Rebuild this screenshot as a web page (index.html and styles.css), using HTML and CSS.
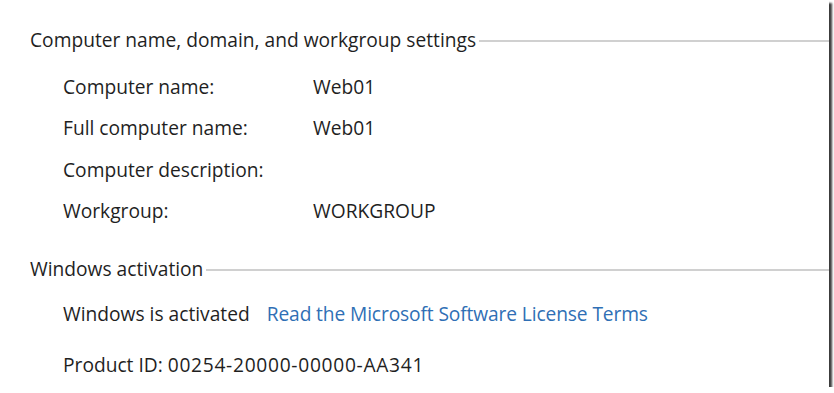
FILE: index.html
```html
<!DOCTYPE html>
<html lang="en">
<head>
<meta charset="utf-8">
<title>System</title>
<link rel="stylesheet" href="styles.css">
</head>
<body>
<div class="frame">
  <section class="group group-first">
    <div class="heading"><span class="heading-text">Computer name, domain, and workgroup settings</span><span class="rule"></span></div>
    <div class="props">
      <div class="label">Computer name:</div><div class="value">Web01</div>
      <div class="label">Full computer name:</div><div class="value">Web01</div>
      <div class="label">Computer description:</div><div class="value"></div>
      <div class="label">Workgroup:</div><div class="value">WORKGROUP</div>
    </div>
  </section>
  <section class="group group-second">
    <div class="heading"><span class="heading-text">Windows activation</span><span class="rule"></span></div>
    <div class="activation">
      <span class="status">Windows is activated</span>
      <a class="link" href="#">Read the Microsoft Software License Terms</a>
    </div>
    <div class="product">Product ID: <span class="product-id">00254-20000-00000-AA341</span></div>
  </section>
</div>
</body>
</html>
```
FILE: styles.css
```css
html, body {
  margin: 0;
  padding: 0;
  background: #ffffff;
}
body {
  font-family: "Open Sans", "Noto Sans", sans-serif;
  font-size: 19.2px;
  color: #1f1f1f;
}
.frame {
  width: 829px;
  height: 387px;
  background: #ffffff;
  box-shadow: 3px 3px 2px #3c3c3c;
  box-sizing: border-box;
  padding-top: 26px;
  overflow: hidden;
}
.heading {
  display: flex;
  align-items: center;
  height: 28px;
  line-height: 28px;
  padding-left: 30px;
}
.heading-text {
  white-space: nowrap;
}
.rule {
  flex: 1;
  height: 0;
  border-top: 2px solid #d0d0d0;
  margin-left: 3px;
  margin-top: 1px;
}
.props {
  display: grid;
  grid-template-columns: 250px auto;
  grid-auto-rows: 41.3px;
  line-height: 41px;
  padding-left: 63px;
  margin-top: 12px;
}
.group-second {
  margin-top: 24px;
}
.activation {
  display: flex;
  gap: 17px;
  line-height: 41px;
  padding-left: 63px;
  margin-top: 10px;
}
.link {
  color: #2f6fb5;
  text-decoration: none;
  letter-spacing: -0.12px;
}
.product {
  line-height: 41px;
  padding-left: 63px;
  margin-top: 10px;
}
.product-id {
  letter-spacing: 0.7px;
}
```
